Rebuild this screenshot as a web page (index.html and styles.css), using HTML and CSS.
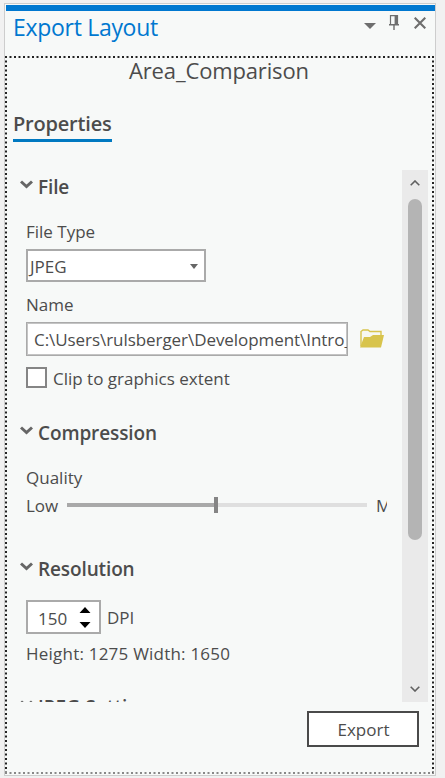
FILE: index.html
```
<!DOCTYPE html>
<html lang="en">
<head>
<meta charset="utf-8">
<title>Export Layout</title>
<link rel="stylesheet" href="styles.css">
</head>
<body>
<main class="pane">
  <header class="titlebar">
    <h1>Export Layout</h1>
    <div class="tools">
      <svg class="menu" width="12" height="6" viewBox="0 0 12 6"><path d="M0 0h12L6 6z" fill="#6e6e6e"/></svg>
      <svg class="pin" width="10" height="15" viewBox="0 0 10 15"><path d="M1.5 9.5V.6h7v8.9" fill="none" stroke="#6e6e6e" stroke-width="1.2"/><path d="M5.6 0H8v10H5.6zM0 9h10v1.6H0zM4.3 10h1.4v5H4.3z" fill="#6e6e6e"/></svg>
      <svg class="close" width="12" height="12" viewBox="0 0 12 12"><path d="M.7.7l10.6 10.6M11.3.7L.7 11.3" stroke="#6e6e6e" stroke-width="2.1"/></svg>
    </div>
  </header>
  <section class="body">
    <svg class="focus" width="429" height="718"><g fill="none" stroke="#222" stroke-dasharray="2 2.5"><path d="M0 1h429" stroke-width="2"/><path d="M1 0v718M428 0v718" stroke-width="2"/><path d="M0 717h429" stroke="#888" stroke-width="2"/></g></svg>
    <h2 class="layout-name"><span>Area_Comparison</span></h2>
    <nav><a class="tab">Properties</a></nav>
    <div class="scroller">
      <div class="content">
        <h3 class="file-head"><svg width="13" height="9" viewBox="0 0 13 9"><path d="M1 1.5l5.5 5 5.5-5" /></svg><span>File</span></h3>
        <label class="type-label">File Type</label>
        <div class="select"><span>JPEG</span><svg width="8" height="5" viewBox="0 0 8 5"><path d="M0 0h8L4 5z" fill="#666"/></svg></div>
        <label>Name</label>
        <div class="name-row">
          <div class="path"><span class="t-path">C:\Users\rulsberger\Development\Intro_</span></div>
          <svg width="25" height="19" viewBox="0 0 25 19"><path d="M1 17V2.5L3 1h5l2 1.5h11V7" fill="#f7f8f0" stroke="#d8c44c" stroke-width="1.4"/><path d="M0 18.5L4 8h6l3-2h11l-3 12.5z" fill="#d8c44c"/></svg>
        </div>
        <div class="check-row"><i class="box"></i><span>Clip to graphics extent</span></div>
        <h3 class="comp-head"><svg width="13" height="9" viewBox="0 0 13 9"><path d="M1 1.5l5.5 5 5.5-5" /></svg><span>Compression</span></h3>
        <label>Quality</label>
        <div class="slider-row"><span class="t-low">Low</span><div class="slider"><i class="fill"></i><i class="thumb"></i><i class="rest"></i></div><span class="max">M</span></div>
        <h3 class="res-head"><svg width="13" height="9" viewBox="0 0 13 9"><path d="M1 1.5l5.5 5 5.5-5" /></svg><span>Resolution</span></h3>
        <div class="dpi-row">
          <div class="spinner"><span class="t-num">150</span><svg width="12" height="22" viewBox="0 0 12 22"><path d="M6 0l5.5 6H.5zM.5 15h11L6 21z" fill="#000"/></svg></div>
          <span class="t-dpi">DPI</span>
        </div>
        <p class="t-size">Height: 1275 Width: 1650</p>
        <h3 class="jpeg-head"><svg width="13" height="9" viewBox="0 0 13 9"><path d="M1 1.5l5.5 5 5.5-5" /></svg><span>JPEG Settings</span></h3>
      </div>
      <div class="scrollbar">
        <svg width="10" height="6" viewBox="0 0 10 6"><path d="M.7 5.3L5 1l4.3 4.3"/></svg>
        <i class="grip"></i>
        <svg width="10" height="6" viewBox="0 0 10 6"><path d="M.7.7L5 5 9.3.7"/></svg>
      </div>
    </div>
    <footer><button>Export</button></footer>
  </section>
</main>
</body>
</html>
```
FILE: styles.css
```
* { box-sizing: border-box; }
body { margin: 0; height: 778px; padding: 3px 9px 2px 4px; background: #f1f1f1; color: #4c4c4c; font: 17px/24px "Open Sans", "Noto Sans", sans-serif; overflow: hidden; }
h1, h2, h3, p { margin: 0; font-weight: 400; }
svg, label, i { display: block; }
span { white-space: nowrap; }
label, p { height: 24px; line-height: 26px; }
.pane { width: 432px; height: 773px; border: 1px solid #cdcdcd; background: #f7f9f8; }
.titlebar { height: 52px; margin: 1px 0 0 1px; border-top: 6px solid #0078d0; display: flex; justify-content: space-between; padding: 0 9px 0 7px; }
h1 { font-size: 23px; line-height: 32px; color: #0078d0; letter-spacing: -.3px; }
.tools { display: flex; align-items: flex-start; }
.menu { margin: 12px 13px 0 0; }
.pin { margin: 4px 15px 0 0; }
.close { margin-top: 6px; }
.body { position: relative; height: 718px; margin-top: -1px; }
.focus { position: absolute; left: 0; top: 0; }
.layout-name { font-size: 22px; line-height: 29px; padding: 0 0 0 124px; height: 54px; letter-spacing: -.14px; }
nav { height: 60px; padding-left: 8px; }
.tab { display: block; width: 99px; height: 32px; line-height: 27px; font-size: 20px; font-weight: 600; letter-spacing: -.2px; border-bottom: 3px solid #0079c1; }
.scroller { display: flex; justify-content: space-between; height: 532px; padding: 0 7px 0 15px; }
.content { width: 367px; height: 532px; padding: 5px 0 0 6px; overflow: hidden; }
h3 { display: flex; gap: 5px; margin-left: -6px; height: 24px; font-size: 19px; font-weight: 600; letter-spacing: -.12px; }
h3 svg { margin-top: 5px; fill: none; stroke: #666; stroke-width: 3; }
.type-label { margin-top: 20px; }
.select { width: 180px; height: 33px; margin: 6px 0 10px; border: 2px solid #aaa; background: #fff; display: flex; justify-content: space-between; padding: 3px 6px 0 2px; line-height: 26px; }
.select svg { margin-top: 10px; }
.name-row { display: flex; gap: 12px; margin-top: 6px; }
.path { width: 322px; flex: none; height: 34px; border: 1px solid #aaa; box-shadow: inset 0 0 0 1px #c4c4c4; background: #fff; padding: 5px 0 0 7px; overflow: hidden; letter-spacing: -.06px; }
.name-row svg { margin-top: 7px; flex: none; }
.check-row { display: flex; gap: 6px; height: 24px; line-height: 26px; margin-top: 10px; }
.box { width: 21px; height: 21px; margin-top: 1px; border: 2px solid #858585; background: #fff; }
.comp-head { margin: 31px 0 20px -6px; }
.slider-row { display: flex; height: 24px; line-height: 26px; margin-top: 4px; }
.t-low { width: 41px; flex: none; }
.slider { width: 300px; flex: none; display: flex; align-items: center; }
.fill { width: 147px; height: 4px; background: #a9a9a9; }
.thumb { width: 4px; height: 16px; background: #858585; }
.rest { flex: 1; height: 4px; background: #dfdfdf; }
.max { margin-left: 9px; width: 11px; overflow: hidden; }
.res-head { margin: 40px 0 19px -6px; }
.dpi-row { display: flex; gap: 6px; }
.spinner { width: 75px; height: 34px; border: 2px solid #aaa; background: #fff; display: flex; justify-content: space-between; padding: 4px 8px 0 10px; line-height: 26px; }
.spinner svg { margin-top: 1px; }
.t-dpi { margin-top: 5px; line-height: 26px; }
.t-size { margin-top: 7px; letter-spacing: .22px; }
.jpeg-head { margin-top: 30px; letter-spacing: .1px; }
.scrollbar { width: 26px; height: 532px; background: #eaeaea; display: flex; flex-direction: column; align-items: center; padding: 10px 0; }
.scrollbar svg { fill: none; stroke: #606060; stroke-width: 1.6; }
.grip { width: 14px; height: 341px; margin: 13px 0 146px; border-radius: 7px; background: #b4b4b4; }
footer { display: flex; justify-content: flex-end; padding: 9px 16px 0 0; }
button { width: 112px; height: 36px; border: 2px solid #4a4a4a; background: #fff; color: inherit; font: inherit; padding: 1px 0 0 1px; }
```
